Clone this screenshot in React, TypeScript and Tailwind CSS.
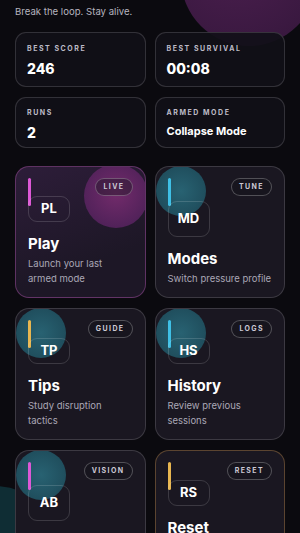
import React from 'react';

interface Stat {
  label: string;
  value: string;
  small?: boolean;
}

interface Tile {
  code: string;
  title: string;
  desc: string;
  tag: string;
  bar: string;
  variant: 'live' | 'teal' | 'amber';
}

const statsTop: Stat[] = [
  { label: 'BEST SCORE', value: '246' },
  { label: 'BEST SURVIVAL', value: '00:08' },
];

const statsBottom: Stat[] = [
  { label: 'RUNS', value: '2' },
  { label: 'ARMED MODE', value: 'Collapse Mode', small: true },
];

// descriptions keep the reference's line breaks
const tiles: Tile[] = [
  { code: 'PL', title: 'Play', desc: 'Launch your last\narmed mode', tag: 'LIVE', bar: 'bg-[#dd58d6]', variant: 'live' },
  { code: 'MD', title: 'Modes', desc: 'Switch pressure profile', tag: 'TUNE', bar: 'bg-[#3fc0e6]', variant: 'teal' },
  { code: 'TP', title: 'Tips', desc: 'Study disruption\ntactics', tag: 'GUIDE', bar: 'bg-[#e8b650]', variant: 'teal' },
  { code: 'HS', title: 'History', desc: 'Review previous\nsessions', tag: 'LOGS', bar: 'bg-[#3fc0e6]', variant: 'teal' },
  { code: 'AB', title: 'About', desc: 'Why the loop exists', tag: 'VISION', bar: 'bg-[#dd58d6]', variant: 'teal' },
  { code: 'RS', title: 'Reset', desc: 'Clear local progress\nand records', tag: 'RESET', bar: 'bg-[#e8b650]', variant: 'amber' },
];

function StatCard({ stat, tall }: { stat: Stat; tall: boolean }) {
  return (
    <div
      className={
        'rounded-[11px] border border-white/15 bg-[#111017]/90 px-[11px] ' +
        (tall ? 'h-[55px] pt-[11px]' : 'h-[51px] pt-[10px]')
      }
    >
      <div className="text-[7px] leading-[10px] font-bold tracking-[0.22em] text-[#bdbbc7]">{stat.label}</div>
      {stat.small ? (
        <div className="mt-[6px] text-[11px] leading-[14px] font-bold text-white">{stat.value}</div>
      ) : (
        <div className="mt-[6px] text-[14px] leading-[18px] font-extrabold text-white">{stat.value}</div>
      )}
    </div>
  );
}

function TileCard({ tile }: { tile: Tile }) {
  const shell =
    tile.variant === 'live'
      ? 'border-[#7a3f7c]/70 bg-[linear-gradient(160deg,#2d1d39,#1d1726_70%)]'
      : tile.variant === 'amber'
      ? 'border-[#6b5034]/80 bg-[#1a1721]'
      : 'border-white/15 bg-[#1a1721]';

  return (
    <div className={'relative h-[132px] overflow-hidden rounded-[14px] border ' + shell}>
      {/* glow orbs */}
      {tile.variant === 'live' && (
        <div className="absolute left-[68px] top-[-3px] h-[64px] w-[64px] rounded-full bg-[radial-gradient(circle_at_50%_45%,#732b6b,#52225a_70%,#461f4e)]" />
      )}
      {tile.variant === 'teal' && (
        <div className="absolute left-0 top-[-1px] h-[50px] w-[50px] rounded-full bg-[radial-gradient(circle_at_50%_50%,#286272,#1f4d5c_75%,#1c4454)]" />
      )}
      {tile.variant === 'amber' && (
        <div className="absolute left-[-8px] top-[112px] h-[70px] w-[70px] rounded-full bg-[radial-gradient(circle_at_50%_50%,#6e4c30,#473324)]" />
      )}
      <div className={'absolute left-[12px] top-[11px] h-[28px] w-[3px] rounded-full ' + tile.bar} />

      <div className="relative flex h-full flex-col px-[12px] pt-[11px] pb-[11px]">
        <div className="flex justify-end">
          <span className="flex h-[18px] items-center rounded-full border border-white/25 bg-[#15131b]/40 px-[7px] text-[7px] font-bold tracking-[0.2em] text-[#cbc8d4]">
            {tile.tag}
          </span>
        </div>
        <div className="mt-auto flex h-[36px] w-[42px] items-center justify-center rounded-[9px] border border-white/15 text-[13px] font-bold text-white">
          {tile.code}
        </div>
        <div className="mt-[12px] text-[15px] leading-[20px] font-bold text-white">{tile.title}</div>
        <div className="mt-[2px] whitespace-pre-line text-[9.5px] leading-[15px] text-[#aaa7b6]">{tile.desc}</div>
      </div>
    </div>
  );
}

function App() {
  return (
    <div
      className="relative h-[533px] w-full overflow-hidden bg-[#0b0a0f]"
      style={{ fontFamily: 'Inter, "Noto Sans", sans-serif' }}
    >
      {/* background glows */}
      <div className="absolute left-[181px] top-[-90px] h-[136px] w-[136px] rounded-full bg-[radial-gradient(circle_at_40%_30%,#4d1f50,#3b1941_70%,#331638)]" />
      <div className="absolute left-[-70px] top-[486px] h-[130px] w-[130px] rounded-full bg-[#0f2d34]" />

      <div className="relative px-[15px] pt-[5px]">
        <p className="text-[9.6px] leading-[14px] text-[#b6b4bf]">Break the loop. Stay alive.</p>

        <div className="mt-[13px] grid grid-cols-2 gap-x-[9px] gap-y-[10px]">
          {statsTop.map((s) => (
            <StatCard key={s.label} stat={s} tall={true} />
          ))}
          {statsBottom.map((s) => (
            <StatCard key={s.label} stat={s} tall={false} />
          ))}
        </div>

        <div className="mt-[18px] grid grid-cols-2 gap-x-[9px] gap-y-[10px]">
          {tiles.map((t) => (
            <TileCard key={t.code} tile={t} />
          ))}
        </div>
      </div>
    </div>
  );
}

export default App;
